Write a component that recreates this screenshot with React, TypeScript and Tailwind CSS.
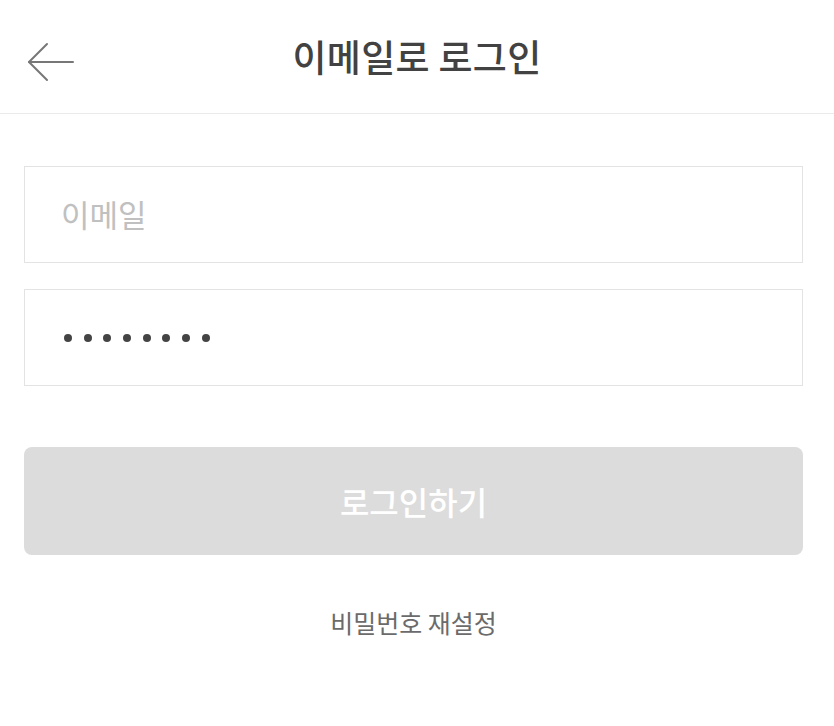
import React from 'react';

const font = { fontFamily: '"Noto Sans CJK KR", "Noto Sans", sans-serif' };

function BackArrow() {
  return (
    <svg width="48" height="40" viewBox="0 0 48 40" fill="none" stroke="#777777" strokeWidth="2" strokeLinecap="round" strokeLinejoin="round">
      <path d="M2 20 H46" />
      <path d="M20 2 L2 20 L20 38" />
    </svg>
  );
}

export default function App() {
  return (
    <div className="w-[834px] h-[726px] bg-white flex flex-col" style={font}>
      <header className="relative h-[114px] border-b border-[#ebebeb] flex items-center justify-center">
        <button className="absolute left-[27px] top-[42px]">
          <BackArrow />
        </button>
        <h1 className="text-[37px] font-medium text-[#424242] tracking-[0.3px]">이메일로 로그인</h1>
      </header>

      <main className="flex flex-col pl-[24px] pr-[31px] pt-[52px]">
        <div className="h-[97px] border border-[#e3e3e3] flex items-center px-[36px]">
          <span className="text-[31px] text-[#c0c0c0]">이메일</span>
        </div>
        <div className="mt-[26px] h-[97px] border border-[#e3e3e3] flex items-center pl-[39px]">
          <div className="flex gap-[11.7px]">
            {Array.from({ length: 8 }).map((_, i) => (
              <span key={i} className="w-[8px] h-[8px] rounded-full bg-[#444444]" />
            ))}
          </div>
        </div>

        <button className="mt-[61px] h-[108px] rounded-[8px] bg-[#dcdcdc] flex items-center justify-center">
          <span className="text-[32px] font-medium text-white">로그인하기</span>
        </button>

        <div className="mt-[49px] flex justify-center">
          <span className="text-[25px] text-[#6b6b6b]">비밀번호 재설정</span>
        </div>
      </main>
    </div>
  );
}
